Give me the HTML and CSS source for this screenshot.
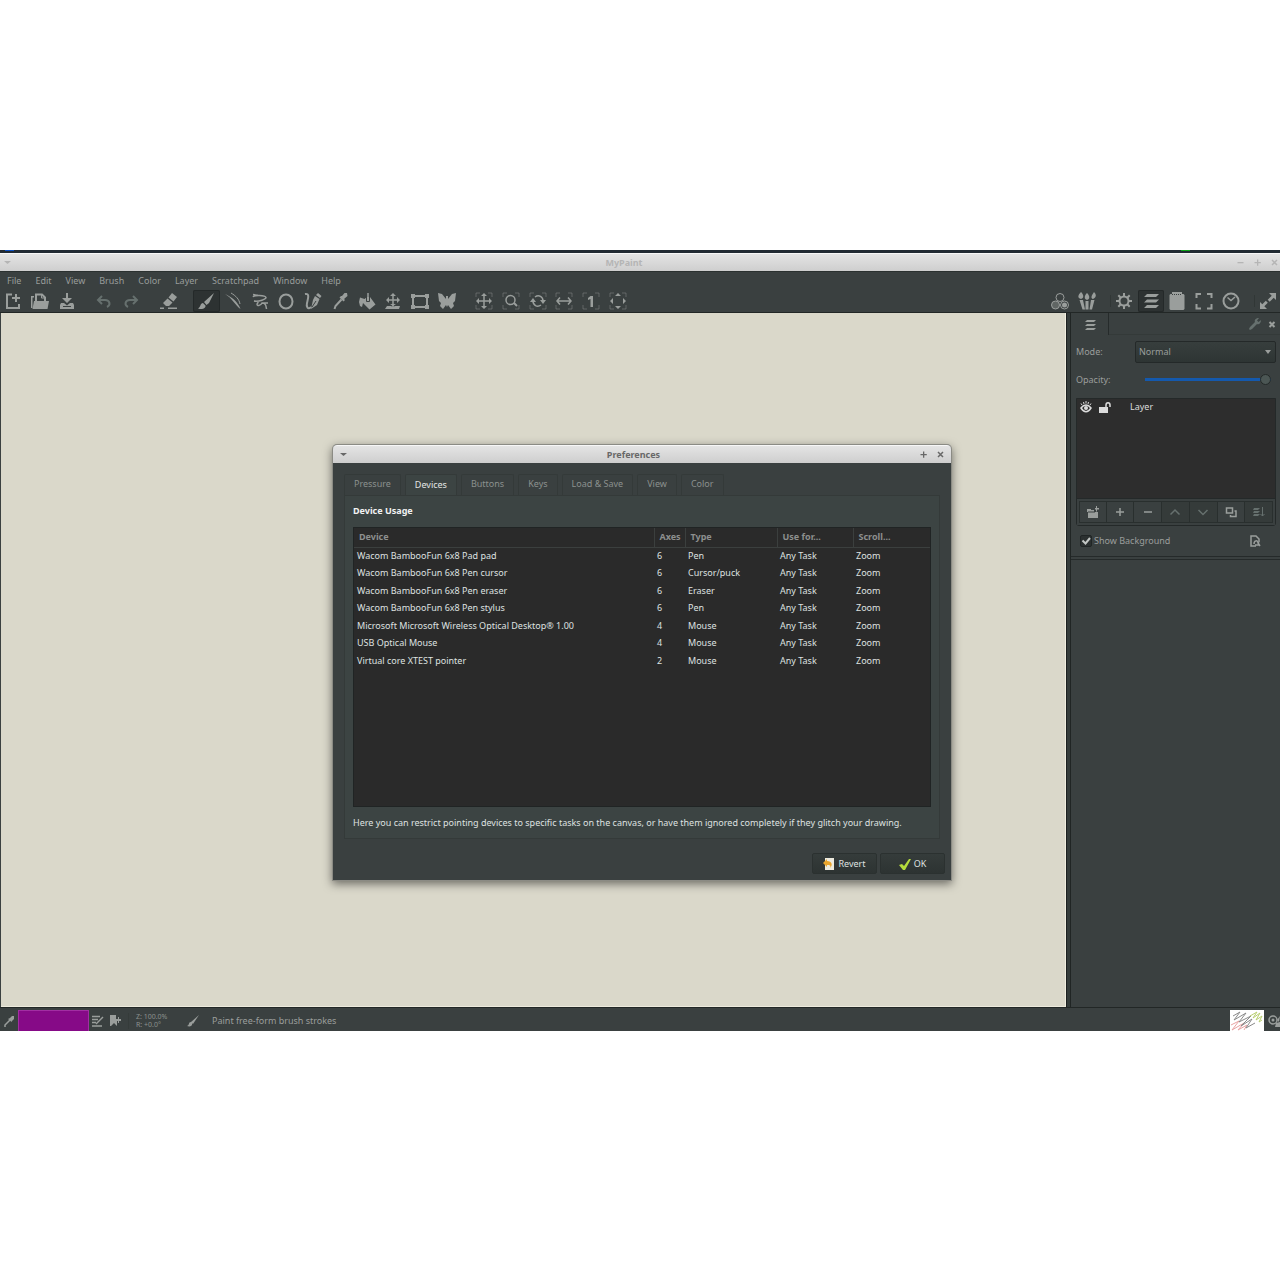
FILE: index.html
```html
<!DOCTYPE html>
<html lang="en">
<head>
<meta charset="utf-8">
<title>MyPaint</title>
<link rel="stylesheet" href="styles.css">
</head>
<body>
<div class="app">
  <div class="desktop-strip"><i class="dot-blue"></i><i class="dot-green"></i></div>
  <header class="titlebar titlebar-main">
    <svg class="wm" viewBox="0 0 9 9"><path d="M1 3h7L4.500 6z"/></svg>
    <span class="window-title">MyPaint</span>
    <svg class="wm" viewBox="0 0 9 9"><path d="M1.500 4h6v1.300h-6z"/></svg>
    <svg class="wm" viewBox="0 0 9 9"><path d="M4 1.500h1.300V4h2.500v1.300H5.300v2.500H4V5.300H1.500V4H4z"/></svg>
    <svg class="wm" viewBox="0 0 9 9"><path class="ln" d="M2 2l5 5M7 2L2 7"/></svg>
  </header>
  <nav class="menubar">
    <button>File</button><button>Edit</button><button>View</button><button>Brush</button><button>Color</button><button>Layer</button><button>Scratchpad</button><button>Window</button><button>Help</button>
  </nav>
  <div class="toolbar">
    <div class="group g3">
      <button aria-label="New"><svg viewBox="0 0 18 18"><path class="l2" d="M8 2.500H3v13.500h12v-4"/><path class="l2" d="M8 6h8M12 2v8"/></svg></button>
      <button aria-label="Open"><svg viewBox="0 0 18 18"><path d="M0 4h3v1.500H1.500V16H0z"/><path class="l2" d="M5 9V2.500h6l3 3V9"/><path class="l1" d="M10.500 2v4H15"/><path d="M3 9h15l-1.500 8H1.500z"/></svg></button>
      <button aria-label="Save"><svg viewBox="0 0 18 18"><path d="M8 1h2v5h4L9 11 4 6h4zM3 11h3l3 2.500 3-2.500h3l1 2v4H2v-4z"/><path class="cut" d="M5 14.500h8"/></svg></button>
    </div>
    <div class="group g2">
      <button class="dim" aria-label="Undo"><svg viewBox="0 0 18 18"><path class="l2" d="M7 4L3 8l4 4M3 8h7c5 0 6 5 2 7"/></svg></button>
      <button class="dim" aria-label="Redo"><svg viewBox="0 0 18 18"><path class="l2" d="M11 4l4 4-4 4M15 8H8c-5 0-6 5-2 7"/></svg></button>
    </div>
    <div class="group g1">
      <button aria-label="Eraser"><svg viewBox="0 0 18 18"><path d="M12 1l5 4-3.500 4.500-5-4zM7.500 6.500l5 4L9 14H6l-3-3zM0 15.500h4v1.500H0zM8 15.500h9v1.500H8z"/></svg></button>
    </div>
    <div class="group g10">
      <button class="active" aria-label="Freehand"><svg viewBox="0 0 18 18"><path d="M17 1L7 10l2.500 3L12 11zM6 11c-3 0-2 4-5 5.500 4 1.500 8 0 7.500-3z"/></svg></button>
      <button aria-label="Lines"><svg viewBox="0 0 18 18"><path d="M1 2c7 3 13 8 15.500 15C12 14 8 6 1 2z"/><path class="l1" d="M7 1c5 3 8 6 9 11"/></svg></button>
      <button aria-label="Connected lines"><svg viewBox="0 0 18 18"><path class="l15" d="M7 3.500L2 2.500M3 9c5 1 12-2 12-3.500C14 3 3 3 2 5M3 9c4 0 5 1 3 3 0 3 4 1 5-1h6M11 11c4 0 4 3 4.500 6"/></svg></button>
      <button aria-label="Ellipse"><svg viewBox="0 0 18 18"><ellipse class="l2" cx="9" cy="9.500" rx="6.500" ry="7"/></svg></button>
      <button aria-label="Inking"><svg viewBox="0 0 18 18"><path class="l2" d="M1 2c5-1 3 5 2 9s1 7 4 4"/><path d="M14 1l3.500 3L16 6l-4-3zM11 4l4.500 3-2.500 6-6 4 2-9z"/><path class="cut" d="M8 15l4-6"/></svg></button>
      <button aria-label="Pick color"><svg viewBox="0 0 18 18"><path d="M11 4l2.500-3H16l.5 3L13 7l1 1-1.500 1.500-4-4L10 4z"/><path class="l2" d="M10.500 7.500l-6 6.500-1 3"/></svg></button>
      <button aria-label="Fill"><svg viewBox="0 0 18 18"><path d="M2 5.500L6.500 7 9 5h3l5.500 7.500-6 5L5 11l-1 4-2-1-1-4z"/><path class="l15" d="M10 1v8"/><path class="cut" d="M8.500 4v5.500h3V4"/></svg></button>
      <button aria-label="Move layer"><svg viewBox="0 0 18 18"><path class="l15" d="M9 2v13M3 8h12"/><path d="M9 1l3 3H6zM2 8l3-3v6zM16 8l-3-3v6zM9 14l3-2H6zM3 14h4l2 1 2-1h5l-1 3H1z"/></svg></button>
      <button aria-label="Edit frame"><svg viewBox="0 0 18 18"><path class="l2" d="M2 4h14v11H2z"/><path d="M0 2h4v4H0zM14 2h4v4h-4zM0 13h4v4H0zM14 13h4v4h-4z"/></svg></button>
      <button aria-label="Symmetry"><svg viewBox="0 0 18 18"><path d="M0 1l4 1 4 5V4h2v3l4-5 4-1-1 8-2 2 1 3-3 3-3-4-1 2-1-2-3 4-3-3 1-3-2-2z"/></svg></button>
    </div>
    <div class="group g6">
      <button aria-label="Pan"><svg viewBox="0 0 18 18"><path class="corner" d="M1 5V1h4M13 1h4v4M17 13v4h-4M5 17H1v-4"/><path class="l15" d="M9 3v12M3 9h12"/><path d="M9 1l3 3H6zM1 9l3-3v6zM17 9l-3-3v6zM9 17l3-3H6z"/></svg></button>
      <button aria-label="Zoom"><svg viewBox="0 0 18 18"><path class="corner" d="M1 5V1h4M13 1h4v4M17 13v4h-4M5 17H1v-4"/><circle class="l15" cx="8.500" cy="8" r="4.500"/><path class="l2" d="M12 11l3 3"/></svg></button>
      <button aria-label="Rotate"><svg viewBox="0 0 18 18"><path class="corner" d="M1 5V1h4M13 1h4v4M17 13v4h-4M5 17H1v-4"/><path class="l15" d="M6 5c4-3 8 0 8 4M12 13c-4 3-8 0-8-4"/><path d="M11 8h6l-3 4zM1 10h6L4 6z"/></svg></button>
      <button aria-label="Mirror"><svg viewBox="0 0 18 18"><path class="corner" d="M1 5V1h4M13 1h4v4M17 13v4h-4M5 17H1v-4"/><path class="l15" d="M3 9h12M5 5.500L2 9l3 3.500M13 5.500L16 9l-3 3.500"/></svg></button>
      <button aria-label="Zoom 1:1"><svg viewBox="0 0 18 18"><path class="corner" d="M1 5V1h4M13 1h4v4M17 13v4h-4M5 17H1v-4"/><path d="M8.500 4H11v11H8.500V7L6 8V6z"/></svg></button>
      <button aria-label="Fit view"><svg viewBox="0 0 18 18"><path class="corner" d="M1 5V1h4M13 1h4v4M17 13v4h-4M5 17H1v-4"/><path d="M9 1l3 3H6zM1 9l3-3v6zM17 9l-3-3v6zM9 17l3-3H6z"/></svg></button>
    </div>
    <div class="group g2 push">
      <button aria-label="Color panels"><svg viewBox="0 0 18 18"><circle class="l1" cx="9" cy="5.500" r="4"/><circle class="l1 half" cx="4.500" cy="13" r="4"/><circle class="l1" cx="13.500" cy="13" r="4"/><circle cx="13.500" cy="13" r="2.500"/></svg></button>
      <button aria-label="Brushes"><svg viewBox="0 0 18 18"><path d="M3 0c3 3 3 6 0 7-4-1-3-4 0-7zM9 1c3 3 3 6 0 7-3-1-3-4 0-7zM16 0c3 3 2 6-1 7-3-1-1-4 1-7zM1.500 8h3.500l2 9.500H4.500zM7.500 9h3v8.500h-3zM13 8h3.500l-2.500 9.500h-2.500z"/></svg></button>
    </div>
    <div class="group g5 ruled">
      <button aria-label="Settings"><svg viewBox="0 0 18 18"><circle class="l2" cx="9" cy="9" r="4.500"/><path class="l2" d="M9 1v3M9 14v3M1 9h3M14 9h3M3.300 3.300l2.200 2.200M12.500 12.500l2.200 2.200M14.700 3.300l-2.200 2.200M3.300 14.700l2.200-2.200"/></svg></button>
      <button class="active" aria-label="Layers"><svg viewBox="0 0 18 18"><path d="M5 2h12l-3 3H2zM5 7.500h12l-3 3H2zM5 13h12l-3 3H2z"/></svg></button>
      <button aria-label="Scratchpad"><svg viewBox="0 0 18 18"><path d="M4 0h10v2h1.500l1 1v14l-1 1h-13l-1-1V3l1-1H4z"/><path class="cut dash" d="M4 2.500h10"/></svg></button>
      <button aria-label="Preview"><svg viewBox="0 0 18 18"><path class="l2" d="M1.500 6V2H6M12 2h4.500v4M16.500 12v4.500H12M6 16.500H1.500V12"/></svg></button>
      <button aria-label="History"><svg viewBox="0 0 18 18"><circle class="l2" cx="9" cy="9" r="7.500"/><path class="l15" d="M5.500 5.500l3.500 3 4-3.500"/></svg></button>
    </div>
    <div class="group gend ruled">
      <button aria-label="Fullscreen"><svg viewBox="0 0 18 18"><path d="M10 1h7v7l-2.300-2.300-4 4-2-2 4-4zM1 17v-7l2.300 2.300 3.500-3.500 2 2-3.500 3.500L8 17z"/></svg></button>
    </div>
  </div>
  <div class="workspace">
    <main class="canvas"></main>
    <aside class="sidebar">
      <div class="dock-tabs">
        <button class="dock-tab" aria-label="Layers"><svg viewBox="0 0 12 12"><path d="M3 2h9l-2 2H1zM3 6h9l-2 2H1zM3 10h9l-2 2H1z"/></svg></button>
        <button class="dim push" aria-label="Configure"><svg viewBox="0 0 12 12"><path d="M1 9l5-5c-1-2 1-4 4-4L8 2.500 9.500 4 12 2c0 3-2 5-4 4l-5 5-2 1-1-1z"/></svg></button>
        <button aria-label="Close"><svg viewBox="0 0 12 12"><path class="l2" d="M3.500 4l5 5M8.500 4l-5 5"/></svg></button>
      </div>
      <div class="dock">
        <div class="field">
          <label for="mode">Mode:</label>
          <div class="combo"><select id="mode"><option>Normal</option></select><svg viewBox="0 0 6 4"><path d="M0 0h6L3 4z"/></svg></div>
        </div>
        <div class="field opacity">
          <label for="opacity">Opacity:</label>
          <input type="range" id="opacity" min="0" max="100" value="100">
        </div>
        <div class="layers">
          <div class="layer">
            <svg viewBox="0 0 12 12"><path class="l15" d="M1 7c3-4 7-4 10 0-3 5-7 5-10 0z"/><path class="l1" d="M2 4L1 2.500M4 3L3.500 1M6 2.500V0M8 3l.5-2M10 4l1-1.500"/><circle cx="6" cy="7" r="2"/></svg>
            <svg viewBox="0 0 12 12"><path d="M0 6h9v6H0z"/><path class="l15" d="M7 6V4c0-3 4-3 4 0v2"/></svg>
            <span>Layer</span>
          </div>
          <div class="layer-actions">
            <button aria-label="New group"><svg viewBox="0 0 12 12"><path d="M0 3h4v1h3v2h4v6H1V6H0zM8 2h1V0h1v2h2v1.500h-2v2H9v-2H8z"/><path class="cut" d="M1 6h7"/></svg></button>
            <button aria-label="Add layer"><svg viewBox="0 0 12 12"><path class="l15" d="M6 2v8M2 6h8"/></svg></button>
            <button aria-label="Remove layer"><svg viewBox="0 0 12 12"><path class="l15" d="M2 6h8"/></svg></button>
            <button class="dim" aria-label="Raise layer"><svg viewBox="0 0 12 12"><path class="l15" d="M1.500 8.500L6 4l4.500 4.500"/></svg></button>
            <button class="dim" aria-label="Lower layer"><svg viewBox="0 0 12 12"><path class="l15" d="M1.500 4L6 8.500 10.500 4"/></svg></button>
            <button aria-label="Duplicate layer"><svg viewBox="0 0 12 12"><path class="l15" d="M1.500 2h6v5h-6zM9.500 5h1.500v5.500H5.500V9"/></svg></button>
            <button class="dim" aria-label="Merge layer"><svg viewBox="0 0 12 12"><path d="M1 2h6L5 4H0zM1 5h6L5 7H0zM1 8h6l-2 2H0z"/><path class="l1" d="M9.500 1v9M7.500 8l2 2 2-2"/></svg></button>
          </div>
        </div>
        <div class="background-row">
          <label class="check"><input type="checkbox" checked><svg viewBox="0 0 12 12"><path class="l2" d="M2.500 5.500l3 3L10 3"/></svg>Show Background</label>
          <svg class="doc" viewBox="0 0 12 12"><path class="l15" d="M7 11H2V1h5l3 3v3"/><path class="l15" d="M5 9c0-4 4-4 4-1l2 3M9.500 7v3H6"/></svg>
        </div>
      </div>
      <div class="dock-rest"></div>
    </aside>
  </div>
  <footer class="statusbar">
    <svg class="s12" viewBox="0 0 12 12"><path d="M7 3l2-2 2 0v3L9 6 8.500 7 5 4z"/><path class="l15" d="M7 5L2 10v2"/></svg>
    <div class="swatch"></div>
    <svg class="s12 edit" viewBox="0 0 12 12"><path class="l15" d="M0 1.500h8M0 4.500h6M0 7.500h4M0 11h10"/><path class="l15" d="M4 9l7-7"/></svg>
    <svg class="s12 mark" viewBox="0 0 12 12"><path d="M0 0h6v4h2V2h1v2h2v2h-2v2H8V6H7v5L4 8l-3 3H0z"/></svg>
    <div class="zoom">Z: 100.0%<br>R: +0.0°</div>
    <svg class="s12 brush" viewBox="0 0 12 12"><path d="M12 0L4 7l2 2zM4 7c-3 0-1 3-4 4 3 1 6 0 5-3z"/></svg>
    <span class="hint">Paint free-form brush strokes</span>
    <div class="preview"><svg viewBox="0 0 34 21"><path class="p-red" d="M1 15l8-4-7 9 12-7-6 7 9-5-3 5"/><path class="p-gray" d="M3 6l7-4-6 8 12-7-7 9L21 6 11 16l11-7-6 9 9-5"/><path class="p-green" d="M20 6l7-4-4 6 7-5-4 7 6-4-3 6 3-2"/></svg></div>
    <svg class="s12 gear" viewBox="0 0 12 12"><circle class="l15" cx="5" cy="5" r="4"/><circle cx="5" cy="5" r="1.500"/><path d="M12 1L9 5l2 2zM8 8l4-1v5H7z"/></svg>
  </footer>

  <section class="dialog" role="dialog" aria-labelledby="dlg-title">
    <header class="titlebar titlebar-dialog">
      <svg class="wm" viewBox="0 0 9 9"><path d="M1 3h7L4.500 6z"/></svg>
      <h1 class="window-title" id="dlg-title">Preferences</h1>
      <svg class="wm" viewBox="0 0 9 9"><path d="M4 1.500h1.300V4h2.500v1.300H5.300v2.500H4V5.300H1.500V4H4z"/></svg>
      <svg class="wm" viewBox="0 0 9 9"><path class="ln" d="M2 2l5 5M7 2L2 7"/></svg>
    </header>
    <div class="dialog-body">
      <div class="tabs" role="tablist">
        <button role="tab">Pressure</button><button role="tab" class="selected" aria-selected="true">Devices</button><button role="tab">Buttons</button><button role="tab">Keys</button><button role="tab">Load &amp; Save</button><button role="tab">View</button><button role="tab">Color</button>
      </div>
      <div class="panel">
        <h2>Device Usage</h2>
        <div class="table-box">
          <table>
            <colgroup><col class="c-device"><col class="c-axes"><col class="c-type"><col class="c-use"><col></colgroup>
            <thead><tr><th>Device</th><th>Axes</th><th>Type</th><th>Use for...</th><th>Scroll...</th></tr></thead>
            <tbody>
              <tr><td>Wacom BambooFun 6x8 Pad pad</td><td>6</td><td>Pen</td><td>Any Task</td><td>Zoom</td></tr>
              <tr><td>Wacom BambooFun 6x8 Pen cursor</td><td>6</td><td>Cursor/puck</td><td>Any Task</td><td>Zoom</td></tr>
              <tr><td>Wacom BambooFun 6x8 Pen eraser</td><td>6</td><td>Eraser</td><td>Any Task</td><td>Zoom</td></tr>
              <tr><td>Wacom BambooFun 6x8 Pen stylus</td><td>6</td><td>Pen</td><td>Any Task</td><td>Zoom</td></tr>
              <tr><td>Microsoft Microsoft Wireless Optical Desktop® 1.00</td><td>4</td><td>Mouse</td><td>Any Task</td><td>Zoom</td></tr>
              <tr><td>USB Optical Mouse</td><td>4</td><td>Mouse</td><td>Any Task</td><td>Zoom</td></tr>
              <tr><td>Virtual core XTEST pointer</td><td>2</td><td>Mouse</td><td>Any Task</td><td>Zoom</td></tr>
            </tbody>
          </table>
        </div>
        <p>Here you can restrict pointing devices to specific tasks on the canvas, or have them ignored completely if they glitch your drawing.</p>
      </div>
      <div class="actions">
        <button><svg viewBox="0 0 12 12"><path class="paper" d="M2 0h9v12H2z"/><path class="arrow" d="M0 5l4-4v2c5 0 6 4 3 7 1-3 0-3-3-3v2z"/></svg>Revert</button>
        <button><svg viewBox="0 0 12 12"><path class="ok" d="M0 7l3-1 2 2 5-7 2 0-6 11H4z"/></svg>OK</button>
      </div>
    </div>
  </section>
</div>
</body>
</html>
```

FILE: styles.css
```css
* { box-sizing: border-box; }
body {
  margin: 0;
  padding: 250px 0 249px;
  min-height: 100vh;
  display: flex;
  background: #fff;
  font: 9px/14px "Noto Sans", sans-serif;
  color: #9a9e9c;
}
button, select, input { font: inherit; color: inherit; }
button { background: none; border: 0; padding: 0; display: flex; align-items: center; justify-content: center; white-space: nowrap; }
h1, h2, p { margin: 0; font-size: inherit; }
svg { display: block; flex: none; fill: currentColor; }
.l1, .l15, .l2, .corner, .ln { fill: none; stroke: currentColor; stroke-width: 1; }
.l15 { stroke-width: 1.5; }
.l2 { stroke-width: 2; }
.corner { opacity: .4; }
.half { fill: #606664; }
.cut { fill: none; stroke: #3a4040; stroke-width: 1; }
.dash { stroke-dasharray: 1 1; }
.dim { color: #66706e; }
.push { margin-left: auto; }

.app { position: relative; flex: 1; min-width: 0; display: flex; flex-direction: column; overflow: hidden; background: #3a4040; }
.desktop-strip { height: 3px; background: #222b33; display: flex; justify-content: space-between; padding: 0 90px 0 5px; overflow: hidden; }
.dot-blue { width: 9px; height: 1px; background: #0b4fc4; }
.dot-green { width: 9px; height: 1px; background: #0ca517; }

.titlebar { display: flex; align-items: center; background: linear-gradient(#e4e4e4, #cecece); border-top: 1px solid #f7f7f7; }
.titlebar-main { height: 18px; padding: 0 1px 0 3px; gap: 8px; color: #b5b5b5; }
.titlebar-dialog { height: 18px; padding: 0 6px; gap: 8px; color: #686868; border-radius: 4px 4px 0 0; }
.window-title { flex: 1; text-align: center; font-weight: 700; }
.wm { width: 9px; height: 9px; }
.wm .ln { stroke-width: 1.5; }

.menubar { display: flex; gap: 14px; height: 19px; padding: 0 0 1px 7px; border-top: 1px solid #2b3130; color: #999d9b; }
.toolbar { height: 23px; display: flex; gap: 11px; border-bottom: 1px solid #222726; }
.group { display: grid; grid-auto-flow: column; grid-auto-columns: 1fr; }
.group svg { width: 18px; height: 18px; }
.group .active { background: #2d3232; box-shadow: inset 0 0 0 1px #242929; border-radius: 2px; }
.ruled { box-shadow: -6px 0 0 -5px #313736; position: relative; }
.g1 { width: 27px; }
.g2 { width: 53px; }
.g3 { width: 80px; }
.g5 { width: 133px; }
.g6 { width: 160px; }
.g10 { width: 267px; }
.gend { width: 25px; }

.workspace { flex: 1; display: flex; min-height: 0; }
.canvas { flex: 1; margin-left: 1px; background: #dad8ca; border-right: 1px solid #f0eee0; border-bottom: 1px solid #edebdd; }
.sidebar { width: 214px; display: flex; flex-direction: column; border-left: 1px solid #1c2020; box-shadow: inset 3px 0 #353c3b, inset 4px 0 #202524; padding-left: 4px; }
.dock-tabs { height: 22px; display: flex; align-items: center; gap: 5px; padding-right: 2px; border-bottom: 1px solid #343a39; }
.dock-tabs svg { width: 12px; height: 12px; }
.dock-tab { width: 38px; height: 22px; border-right: 1px solid #262b2b; background: #3a4040; }
.dock { padding: 5px 4px 0 5px; height: 222px; border-bottom: 1px solid #252a2a; }
.field { display: flex; align-items: center; height: 23px; }
.field label { width: 59px; }
.combo { flex: 1; position: relative; display: flex; align-items: center; }
.combo select { width: 100%; height: 22px; appearance: none; padding: 0 3px; border: 1px solid #242929; border-radius: 2px; background: linear-gradient(#373e3d, #2e3534); }
.combo svg { position: absolute; right: 5px; width: 6px; height: 4px; }
.opacity { margin-top: 5px; padding-right: 5px; }
.opacity input { flex: 1; min-width: 0; margin: 0 0 0 10px; height: 12px; appearance: none; background: linear-gradient(#1459ad, #1459ad) center / 100% 3px no-repeat; }
.opacity input::-webkit-slider-thumb { appearance: none; width: 11px; height: 11px; border-radius: 50%; background: #4b5654; border: 1px solid #242a29; }
.layers { margin-top: 7px; height: 128px; background: #2d2d2d; border: 1px solid #242929; border-radius: 0 0 3px 3px; display: flex; flex-direction: column; justify-content: space-between; }
.layer { display: flex; align-items: center; gap: 7px; padding: 1px 3px; color: #dcdcdc; }
.layer svg { width: 12px; height: 12px; }
.layer span { margin-left: 12px; }
.layer-actions { height: 27px; padding: 2px; background: #3a4040; border-top: 1px solid #242929; display: grid; grid-template-columns: repeat(7, 1fr); }
.layer-actions button { border: 1px solid #292f2e; }
.layer-actions button + button { border-left: 0; }
.layer-actions .dim { background: #353b3a; }
.layer-actions svg { width: 12px; height: 12px; }
.background-row { display: flex; align-items: center; justify-content: space-between; height: 29px; padding: 0 15px 0 4px; }
.check { display: flex; align-items: center; gap: 2px; }
.check input { appearance: none; width: 12px; height: 12px; margin: 0; background: #2b3030; border: 1px solid #202525; border-radius: 2px; }
.check svg { width: 12px; height: 12px; margin-left: -14px; color: #c2c6c4; }
.doc { width: 12px; height: 12px; }
.dock-rest { flex: 1; margin-top: 2px; border-top: 1px solid #252a2a; }

.statusbar { height: 24px; display: flex; align-items: center; padding-top: 3px; border-top: 1px solid #222726; overflow: hidden; }
.s12 { width: 12px; height: 12px; margin-left: 3px; }
.swatch { width: 71px; height: 22px; margin-left: 3px; background: #860a87; border: 1px solid #a22ea3; }
.mark { margin-left: 6px; }
.zoom { margin-left: 6px; padding-left: 7px; border-left: 1px solid #353b3a; width: 54px; font-size: 7px; line-height: 8px; color: #8b908e; white-space: nowrap; }
.brush { margin-left: 5px; }
.hint { margin-left: 13px; flex: 1; }
.preview { width: 34px; height: 22px; background: #fff; }
.preview svg { width: 34px; height: 21px; }
.preview path { fill: none; }
.p-red { stroke: #e9a3a3; }
.p-gray { stroke: #8a8a8a; }
.p-green { stroke: #b9cf70; }
.gear { margin-left: 4px; }

.dialog { position: absolute; left: 333px; top: 195px; width: 618px; border-radius: 4px 4px 0 0; background: #3a4040; color: #dfe1e0; box-shadow: 0 0 0 1px #8b8b84, 0 3px 10px 1px rgba(0, 0, 0, .5); }
.dialog-body { padding: 11px 6px 6px 11px; }
.tabs { display: flex; gap: 4px; }
.tabs button { height: 21px; padding: 0 9px 2px; border: 1px solid #343a39; border-bottom: 0; border-radius: 2px 2px 0 0; color: #8b908e; }
.tabs .selected { background: #3c4443; color: #e3e5e4; padding-bottom: 1px; }
.panel { margin-right: 5px; padding: 8px; background: #3c4443; border: 1px solid #343a39; }
.panel h2 { color: #f2f2f2; margin-bottom: 9px; }
.table-box { height: 280px; background: #2a2a2a; border: 1px solid #202424; }
table { width: 100%; border-collapse: collapse; table-layout: fixed; white-space: nowrap; }
th, td { padding: 0 0 0 3px; text-align: left; font-weight: 400; }
tr { height: 17px; }
tbody tr:nth-child(even) { height: 18px; }
thead tr { height: 19px; }
th { padding-left: 5px; font-weight: 700; color: #8d8f8e; border-bottom: 1px solid #3b3f3e; border-right: 1px solid #3b3f3e; }
th:last-child { border-right: 0; }
.c-device { width: 300px; }
.c-axes { width: 31px; }
.c-type { width: 92px; }
.c-use { width: 76px; }
.panel p { margin-top: 9px; white-space: nowrap; }
.actions { display: flex; justify-content: flex-end; gap: 3px; margin-top: 14px; }
.actions button { width: 65px; height: 21px; gap: 3px; border: 1px solid #2b3130; border-radius: 2px; background: linear-gradient(#353c3b, #2d3332); }
.actions svg { width: 12px; height: 12px; }
.paper { fill: #eceade; }
.arrow { fill: #e9a52d; }
.ok { fill: #b4dc3c; }
```
